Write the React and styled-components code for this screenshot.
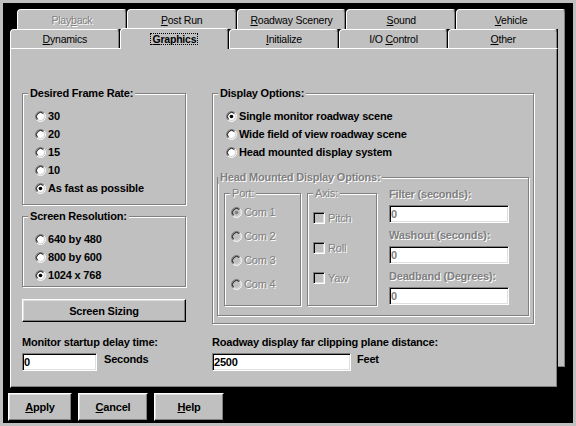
import React from 'react'
import styled, { createGlobalStyle, css } from 'styled-components'

const GlobalStyle = createGlobalStyle`
  * {
    box-sizing: border-box;
  }

  html, body {
    margin: 0;
    padding: 0;
    background: #c0c0c0;
  }

  body {
    font-family: "Liberation Sans", Arial, sans-serif;
    font-size: 11px;
    letter-spacing: -0.2px;
    color: #000000;
  }
`

const dimmed = css`
  color: #808080;
  text-shadow: 1px 1px 0 #ffffff;
`

const Screen = styled.div`
  width: 576px;
  height: 426px;
  background: #000000;
  border: 3px solid #c0c0c0;
  padding: 6px 0 0 5px;
  display: flex;
  flex-direction: column;
`

const TabControl = styled.div`
  margin-left: 2px;
  width: 556px;
  display: flex;
  flex-direction: column;
`

const TabRow = styled.div`
  display: flex;
  align-items: flex-end;
  height: ${p => p.$height}px;
  margin-left: ${p => p.$indent || 0}px;
`

const Tab = styled.div`
  flex: 1;
  height: 100%;
  display: flex;
  align-items: center;
  justify-content: center;
  background: #c0c0c0;
  border-top: 1px solid #ffffff;
  border-left: 1px solid #ffffff;
  border-right: 1px solid #000000;
  box-shadow: inset -1px 0 #808080;
  border-radius: 4px 4px 0 0;
  font-size: 10.5px;
  white-space: nowrap;
  ${p => p.$disabled && dimmed}

  ${p => p.$selected && css`
    position: relative;
    z-index: 1;
    height: 21px;
    margin-bottom: -1px;
    font-weight: bold;
  `}
`

const TabLabel = styled.span`
  line-height: 12px;
`

const Focus = styled.span`
  border: 1px dotted #000000;
  padding: 0 1px;
  line-height: 10px;
`

const FrontLayer = styled.div`
  display: flex;
  align-items: flex-start;
`

const FrontColumn = styled.div`
  width: 548px;
  display: flex;
  flex-direction: column;
`

const BackStrip = styled.div`
  width: 8px;
  height: 339px;
  background: #c0c0c0;
  border-right: 1px solid #000000;
  border-bottom: 1px solid #000000;
  box-shadow: inset -1px -1px #808080;
`

const Panel = styled.div`
  height: 340px;
  background: #c0c0c0;
  border-top: 1px solid #ffffff;
  border-left: 1px solid #ffffff;
  border-right: 1px solid #000000;
  border-bottom: 1px solid #000000;
  box-shadow: inset -1px -1px #808080;
  padding: 38px 0 0 11px;
`

const Layout = styled.div`
  display: grid;
  grid-template-columns: 164px 322px;
  column-gap: 26px;
  row-gap: 12px;
  align-items: start;
`

const Stack = styled.div`
  display: flex;
  flex-direction: column;
`

const Group = styled.fieldset`
  margin: ${p => p.$margin || 0};
  padding: 0;
  min-width: 0;
  width: ${p => (p.$width ? `${p.$width}px` : 'auto')};
  border: 1px solid #808080;
  box-shadow: inset 1px 1px #ffffff, 1px 1px #ffffff;
`

const Legend = styled.legend`
  margin-left: ${p => (p.$offset ?? 5)}px;
  padding: 0 2px;
  line-height: 13px;
  background: #c0c0c0;
  font-weight: ${p => (p.$bold ? 'bold' : 'normal')};
  ${p => p.$disabled && dimmed}
`

const GroupBody = styled.div`
  padding: ${p => p.$pad};
`

const InnerRow = styled.div`
  display: flex;
  align-items: flex-start;
  padding: 3px 0 9px 6px;
`

const Option = styled.div`
  display: flex;
  align-items: center;
  gap: ${p => p.$gap || 2}px;
  height: ${p => p.$h || 18}px;
  white-space: nowrap;
  font-weight: ${p => (p.$bold ? 'bold' : 'normal')};
  ${p => p.$disabled && dimmed}
`

const CheckBox = styled.span`
  width: 12px;
  height: 12px;
  flex: none;
  background: ${p => (p.$disabled ? '#c0c0c0' : '#ffffff')};
  border: 1px solid;
  border-color: #808080 #ffffff #ffffff #808080;
  box-shadow: inset 1px 1px #000000, inset -1px -1px #dfdfdf;
  text-shadow: none;
`

const FieldsColumn = styled.div`
  width: 120px;
  margin-left: 12px;
  display: flex;
  flex-direction: column;
  gap: 5px;
`

const FieldLabel = styled.div`
  font-weight: bold;
  line-height: ${p => p.$lh || 13}px;
  margin-bottom: 4px;
  white-space: nowrap;
  ${p => p.$disabled && dimmed}
`

const TextBox = styled.input`
  width: ${p => p.$w}px;
  height: 18px;
  display: block;
  margin: 0;
  padding: 0 1px;
  background: #ffffff;
  border: 1px solid;
  border-color: #808080 #ffffff #ffffff #808080;
  box-shadow: inset 1px 1px #000000, inset -1px -1px #dfdfdf;
  font-family: "Liberation Sans", Arial, sans-serif;
  font-size: 11px;
  font-weight: bold;
  letter-spacing: -0.2px;
  color: ${p => (p.$disabled ? '#808080' : '#000000')};
  outline: none;
`

const FieldRow = styled.div`
  display: flex;
  align-items: flex-start;
  gap: ${p => p.$gap}px;
`

const Unit = styled.span`
  font-weight: bold;
  line-height: 13px;
`

const Button = styled.button`
  width: ${p => p.$w}px;
  height: ${p => p.$h}px;
  flex: none;
  margin: 0;
  padding: 0;
  background: #c0c0c0;
  border: 1px solid;
  border-color: #ffffff #000000 #000000 #ffffff;
  box-shadow: inset -1px -1px #808080, inset 1px 1px #dfdfdf;
  font-family: "Liberation Sans", Arial, sans-serif;
  font-size: 11px;
  font-weight: bold;
  letter-spacing: -0.2px;
  color: #000000;
`

const ButtonRow = styled.div`
  display: flex;
  gap: 6px;
  margin-top: 5px;
`

const Radio = ({ checked, disabled }) => (
  <svg width="11" height="11" viewBox="0 0 12 12" style={{ flex: 'none' }}>
    <circle cx="6" cy="6" r="4" fill={disabled ? '#c0c0c0' : '#ffffff'} />
    <path d="M2.11 9.89 A5.5 5.5 0 0 1 9.89 2.11" stroke="#808080" fill="none" />
    <path d="M9.89 2.11 A5.5 5.5 0 0 1 2.11 9.89" stroke="#ffffff" fill="none" />
    <path d="M2.82 9.18 A4.5 4.5 0 0 1 9.18 2.82" stroke="#000000" fill="none" />
    <path d="M9.18 2.82 A4.5 4.5 0 0 1 2.82 9.18" stroke="#dfdfdf" fill="none" />
    {checked && <circle cx="6" cy="6" r="2" fill={disabled ? '#808080' : '#000000'} />}
  </svg>
)

const backTabs = [
  { key: 'playback', label: <>Play<u>b</u>ack</>, disabled: true },
  { key: 'postrun', label: <><u>P</u>ost Run</> },
  { key: 'scenery', label: <><u>R</u>oadway Scenery</> },
  { key: 'sound', label: <><u>S</u>ound</> },
  { key: 'vehicle', label: <><u>V</u>ehicle</> },
]

const frontTabs = [
  { key: 'dynamics', label: <><u>D</u>ynamics</> },
  { key: 'graphics', label: <><u>G</u>raphics</>, selected: true },
  { key: 'initialize', label: <><u>I</u>nitialize</> },
  { key: 'io', label: <>I/O <u>C</u>ontrol</> },
  { key: 'other', label: <><u>O</u>ther</> },
]

const frameRates = ['30', '20', '15', '10', 'As fast as possible']
const resolutions = ['640 by 480', '800 by 600', '1024 x 768']
const displayModes = [
  'Single monitor roadway scene',
  'Wide field of view roadway scene',
  'Head mounted display system',
]
const ports = ['Com 1', 'Com 2', 'Com 3', 'Com 4']
const axes = ['Pitch', 'Roll', 'Yaw']
const hmdFields = ['Filter (seconds):', 'Washout (seconds):', 'Deadband (Degrees):']

const App = () => {
  return (
    <Screen>
      <GlobalStyle />
      <TabControl>
        <TabRow $height={20} $indent={7}>
          {backTabs.map(t => (
            <Tab key={t.key} $disabled={t.disabled}>
              <TabLabel>{t.label}</TabLabel>
            </Tab>
          ))}
        </TabRow>

        <FrontLayer>
          <FrontColumn>
            <TabRow $height={19}>
              {frontTabs.map(t => (
                <Tab key={t.key} $selected={t.selected}>
                  {t.selected ? <Focus>{t.label}</Focus> : <TabLabel>{t.label}</TabLabel>}
                </Tab>
              ))}
            </TabRow>

            <Panel>
              <Layout>
                <Stack>
                  <Group>
                    <Legend $bold>Desired Frame Rate:</Legend>
                    <GroupBody $pad="7px 0 7px 12px">
                      {frameRates.map((r, i) => (
                        <Option key={r} $bold>
                          <Radio checked={i === frameRates.length - 1} />
                          <span>{r}</span>
                        </Option>
                      ))}
                    </GroupBody>
                  </Group>

                  <Group $margin="5px 0 0 0">
                    <Legend $bold>Screen Resolution:</Legend>
                    <GroupBody $pad="7px 0 2px 12px">
                      {resolutions.map((r, i) => (
                        <Option key={r} $bold>
                          <Radio checked={i === 2} />
                          <span>{r}</span>
                        </Option>
                      ))}
                    </GroupBody>
                  </Group>

                  <Button $w={164} $h={23} style={{ marginTop: 12 }}>Screen Sizing</Button>
                </Stack>

                <Group>
                  <Legend $bold>Display Options:</Legend>
                  <GroupBody $pad="0 4px 7px 4px">
                    <GroupBody $pad="7px 0 10px 9px">
                      {displayModes.map((m, i) => (
                        <Option key={m} $bold>
                          <Radio checked={i === 0} />
                          <span>{m}</span>
                        </Option>
                      ))}
                    </GroupBody>

                    <Group>
                      <Legend $bold $disabled $offset={0}>Head Mounted Display Options:</Legend>
                      <InnerRow>
                        <Group $width={77}>
                          <Legend $disabled>Port:</Legend>
                          <GroupBody $pad="0 0 9px 6px">
                            {ports.map((p, i) => (
                              <Option key={p} $h={24} $disabled>
                                <Radio checked={i === 0} disabled />
                                <span>{p}</span>
                              </Option>
                            ))}
                          </GroupBody>
                        </Group>

                        <Group $width={70} $margin="0 0 0 6px">
                          <Legend $disabled>Axis:</Legend>
                          <GroupBody $pad="3px 0 12px 5px">
                            {axes.map(a => (
                              <Option key={a} $h={30} $gap={3} $disabled>
                                <CheckBox $disabled />
                                <span>{a}</span>
                              </Option>
                            ))}
                          </GroupBody>
                        </Group>

                        <FieldsColumn>
                          {hmdFields.map(f => (
                            <div key={f}>
                              <FieldLabel $lh={14} $disabled>{f}</FieldLabel>
                              <TextBox $w={120} $disabled value="0" readOnly />
                            </div>
                          ))}
                        </FieldsColumn>
                      </InnerRow>
                    </Group>
                  </GroupBody>
                </Group>

                <div>
                  <FieldLabel>Monitor startup delay time:</FieldLabel>
                  <FieldRow $gap={7}>
                    <TextBox $w={75} value="0" readOnly />
                    <Unit>Seconds</Unit>
                  </FieldRow>
                </div>

                <div>
                  <FieldLabel>Roadway display far clipping plane distance:</FieldLabel>
                  <FieldRow $gap={6}>
                    <TextBox $w={139} value="2500" readOnly />
                    <Unit>Feet</Unit>
                  </FieldRow>
                </div>
              </Layout>
            </Panel>
          </FrontColumn>
          <BackStrip />
        </FrontLayer>
      </TabControl>

      <ButtonRow>
        <Button $w={64} $h={28}><u>A</u>pply</Button>
        <Button $w={70} $h={28}><u>C</u>ancel</Button>
        <Button $w={70} $h={28}><u>H</u>elp</Button>
      </ButtonRow>
    </Screen>
  )
}

export default App
